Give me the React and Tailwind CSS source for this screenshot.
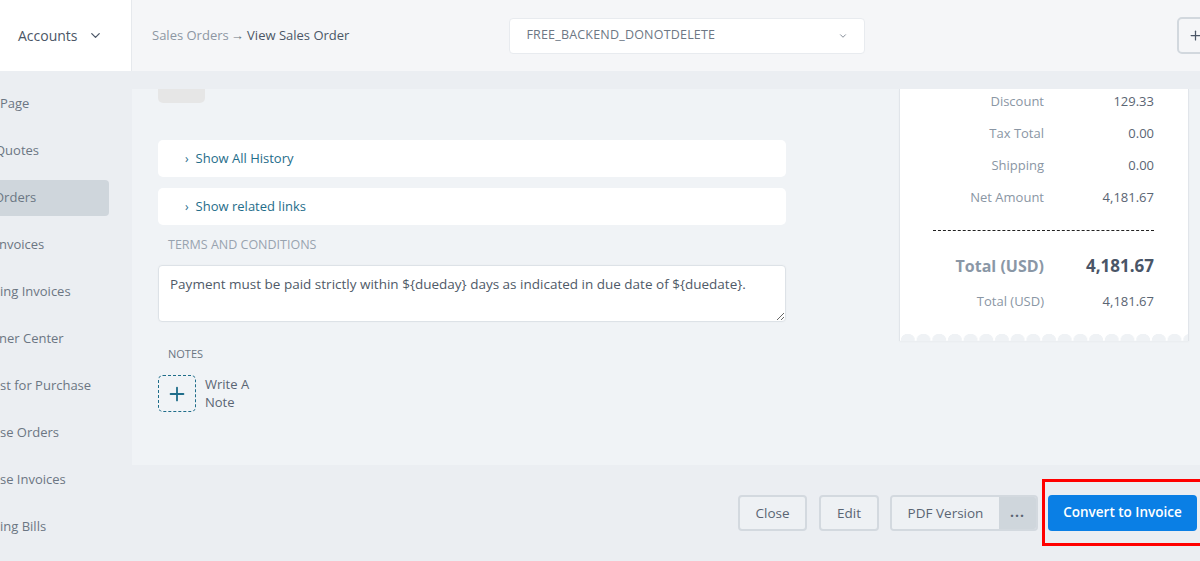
import React from "react";
import { FiChevronDown, FiPlus } from "react-icons/fi";

const sideItems = [
  { label: "Page", cls: "ml-0" },
  { label: "Quotes", cls: "-ml-[5px]" },
  { label: "Orders", cls: "-ml-[6px]", active: true },
  { label: "nvoices", cls: "-ml-[1px]" },
  { label: "ing Invoices", cls: "ml-0" },
  { label: "ner Center", cls: "-ml-[1px]" },
  { label: "st for Purchase", cls: "ml-0" },
  { label: "se Orders", cls: "ml-0" },
  { label: "se Invoices", cls: "ml-0" },
  { label: "ing Bills", cls: "ml-0" },
];

const summaryRows = [
  ["Discount", "129.33"],
  ["Tax Total", "0.00"],
  ["Shipping", "0.00"],
  ["Net Amount", "4,181.67"],
];

function Header() {
  return (
    <div className="flex h-[71px] w-full">
      <div className="flex w-[132px] shrink-0 items-center border-r border-[#e6e9ed] bg-white pl-[18px] text-[14px] text-[#4b5666]">
        Accounts
        <FiChevronDown className="ml-[10px] text-[15px] text-[#4b5666]" />
      </div>
      <div className="flex flex-1 items-center bg-[#f5f6f8] pl-[20px]">
        <div className="text-[13px] text-[#8d97a3]">
          Sales Orders<span className="ml-[2px] text-[#6b7683]">→</span>{" "}
          <span className="text-[#4b5666]">View Sales Order</span>
        </div>
        <div className="ml-[160px] flex h-[36px] w-[356px] items-center justify-between rounded-[4px] border border-[#e8ebef] bg-white pl-[16px] pr-[16px]">
          <span className="text-[12.5px] tracking-[0.2px] text-[#6d7784]">
            FREE_BACKEND_DONOTDELETE
          </span>
          <FiChevronDown className="text-[10px] text-[#6d7784]" />
        </div>
        <div className="ml-auto mr-[-14px] flex h-[37px] w-[37px] items-center justify-center rounded-[5px] border-2 border-[#d2d8de] text-[#4b5666]">
          <FiPlus className="text-[15px]" />
        </div>
      </div>
    </div>
  );
}

function Sidebar() {
  return (
    <div className="w-[132px] shrink-0 overflow-hidden pt-[9px]">
      {sideItems.map((it) => (
        <div key={it.label} className="flex h-[47px] items-center">
          <div
            className={`flex h-[36px] w-[109px] items-center rounded-r-[4px] ${
              it.active ? "bg-[#cfd6dc]" : ""
            }`}
          >
            <span
              className={`whitespace-nowrap text-[13px] text-[#6b7683] ${it.cls}`}
            >
              {it.label}
            </span>
          </div>
        </div>
      ))}
    </div>
  );
}

function LeftColumn() {
  return (
    <div className="w-[654px] shrink-0 pl-[26px]">
      <div className="h-[14px] w-[47px] rounded-b-[5px] bg-[#e6e6e6]" />

      <div className="mt-[37px] flex h-[37px] items-center rounded-[5px] bg-white pl-[27px] text-[13px] text-[#1f6d8a]">
        <span className="mr-[7px] text-[12px]">›</span>Show All History
      </div>
      <div className="mt-[11px] flex h-[37px] items-center rounded-[5px] bg-white pl-[27px] text-[13px] text-[#1f6d8a]">
        <span className="mr-[7px] text-[12px]">›</span>Show related links
      </div>

      <div className="mt-[12px] pl-[10px] text-[12.5px] uppercase leading-[16px] text-[#98a3af]">
        Terms and Conditions
      </div>
      <textarea
        className="mt-[12px] block h-[57px] w-[628px] rounded-[4px] border border-[#dde2e7] bg-white px-[11px] py-[8px] text-[13.5px] leading-[20px] text-[#4f5a68] shadow-[0_0_0_1px_#eef1f4] outline-none"
        defaultValue={
          "Payment must be paid strictly within ${dueday} days as indicated in due date of ${duedate}."
        }
      />

      <div className="mt-[25px] pl-[10px] text-[11px] leading-[14px] text-[#6b7683]">
        NOTES
      </div>
      <div className="mt-[14px] flex items-start">
        <div className="flex h-[37px] w-[38px] items-center justify-center rounded-[5px] border border-dashed border-[#1f6d8a] text-[#1f6d8a]">
          <FiPlus className="text-[22px]" strokeWidth={2} />
        </div>
        <div className="ml-[9px] text-[13px] leading-[18px] text-[#5a6573]">
          Write A
          <br />
          Note
        </div>
      </div>
    </div>
  );
}

function Summary() {
  return (
    <div className="ml-[113px] w-[290px] self-start border-x border-[#e1e5ea] bg-white shadow-[0_1px_2px_rgba(0,0,0,0.03)]">
      <div className="-mt-[3px]">
        {summaryRows.map(([l, v]) => (
          <div key={l} className="flex h-[32px] items-center text-[13px]">
            <div className="w-[144px] text-right text-[#8a96a4]">{l}</div>
            <div className="flex-1 pr-[34px] text-right text-[#5a6573]">{v}</div>
          </div>
        ))}
      </div>
      <div className="ml-[33px] mr-[34px] mt-[16px] border-t border-dashed border-[#222]" />
      <div className="mt-[17px] flex h-[36px] items-center">
        <div className="w-[144px] text-right text-[16px] font-bold text-[#8a97a6]">
          Total (USD)
        </div>
        <div className="flex-1 pr-[34px] text-right text-[17px] font-bold text-[#4a5567]">
          4,181.67
        </div>
      </div>
      <div className="mt-[2px] flex h-[32px] items-center text-[13px]">
        <div className="w-[144px] text-right text-[#8a96a4]">Total (USD)</div>
        <div className="flex-1 pr-[34px] text-right text-[#5a6573]">4,181.67</div>
      </div>
      <div className="h-[14px]" />
      <div className="h-[9px] bg-[radial-gradient(circle_at_50%_100%,#eff2f5_7px,transparent_7.5px)] bg-[length:15.7px_9px] bg-repeat-x" />
    </div>
  );
}

function Footer() {
  return (
    <div className="flex h-[96px] items-center justify-end">
      <button className="h-[36px] w-[69px] rounded-[4px] border-2 border-[#d3d9df] bg-[#eef1f4] text-[13.5px] text-[#5a6573]">
        Close
      </button>
      <button className="ml-[12px] h-[36px] w-[60px] rounded-[4px] border-2 border-[#d3d9df] bg-[#eef1f4] text-[13.5px] text-[#5a6573]">
        Edit
      </button>
      <div className="ml-[11px] flex h-[36px] w-[148px] overflow-hidden rounded-[4px] border-2 border-[#d3d9df]">
        <button className="flex-1 bg-[#eef1f4] text-[13.5px] text-[#5a6573]">
          PDF Version
        </button>
        <button className="flex w-[37px] items-center justify-center bg-[#cfd6dc] pb-[4px] text-[14px] font-bold tracking-[1px] text-[#5a6573]">
          ...
        </button>
      </div>
      <div className="mb-[2px] ml-[4px] border-[3px] border-r-0 border-[#ff0000] pb-[12px] pl-[3px] pr-[3px] pt-[13px]">
        <button className="h-[36px] w-[149px] rounded-[4px] bg-[#0a7fe5] text-[13.5px] font-semibold text-white">
          Convert to Invoice
        </button>
      </div>
    </div>
  );
}

export default function App() {
  return (
    <div className="h-[561px] w-[1200px] overflow-hidden bg-[#ebeef2] font-['Open_Sans',sans-serif]">
      <Header />
      <div className="flex">
        <Sidebar />
        <div className="flex-1">
          <div className="mt-[18px] flex h-[376px] overflow-hidden bg-[#f0f3f6]">
            <LeftColumn />
            <Summary />
          </div>
          <Footer />
        </div>
      </div>
    </div>
  );
}
